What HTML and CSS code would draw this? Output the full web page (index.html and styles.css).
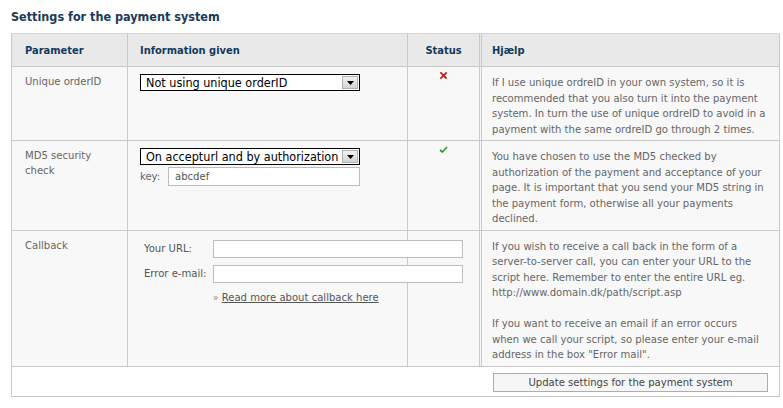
FILE: index.html
```html
<!DOCTYPE html>
<html lang="en">
<head>
<meta charset="utf-8">
<title>Settings for the payment system</title>
<link rel="stylesheet" href="styles.css">
</head>
<body>
<div class="page">
  <h1 class="title">Settings for the payment system</h1>
  <table class="settings">
    <colgroup>
      <col class="c-param">
      <col class="c-info">
      <col class="c-status">
      <col class="c-help">
    </colgroup>
    <thead>
      <tr>
        <th class="param">Parameter</th>
        <th class="info">Information given</th>
        <th class="status">Status</th>
        <th class="help">Hjælp</th>
      </tr>
    </thead>
    <tbody>
      <tr>
        <td class="param">Unique orderID</td>
        <td class="info">
          <div class="select">
            <span class="select-text">Not using unique orderID</span>
            <span class="select-btn"><svg width="7" height="4" viewBox="0 0 7 4"><path d="M0 0H7L3.5 4Z" fill="#000"/></svg></span>
          </div>
        </td>
        <td class="status">
          <svg class="icon" width="7" height="7" viewBox="0 0 7 7"><path d="M1 1L6 6M6 1L1 6" stroke="#c4261d" stroke-width="1.8" stroke-linecap="square"/></svg>
        </td>
        <td class="help">If I use unique ordreID in your own system, so it is recommended that you also turn it into the payment system. In turn the use of unique ordreID to avoid in a payment with the same ordreID go through 2 times.</td>
      </tr>
      <tr>
        <td class="param">MD5 security check</td>
        <td class="info">
          <div class="select">
            <span class="select-text">On accepturl and by authorization</span>
            <span class="select-btn"><svg width="7" height="4" viewBox="0 0 7 4"><path d="M0 0H7L3.5 4Z" fill="#000"/></svg></span>
          </div>
          <div class="key-row">
            <span class="key-label">key:</span>
            <span class="field key-field">abcdef</span>
          </div>
        </td>
        <td class="status">
          <svg class="icon" width="9" height="7" viewBox="0 0 9 7"><path d="M1 4L3.3 6L8 1" stroke="#2e9a2e" stroke-width="1.7" fill="none"/></svg>
        </td>
        <td class="help">You have chosen to use the MD5 checked by authorization of the payment and acceptance of your page. It is important that you send your MD5 string in the payment form, otherwise all your payments declined.</td>
      </tr>
      <tr>
        <td class="param">Callback</td>
        <td class="info">
          <div class="callback">
            <span class="cb-label">Your URL:</span>
            <span class="field cb-field"></span>
            <span class="cb-label">Error e-mail:</span>
            <span class="field cb-field"></span>
            <span class="cb-link"><span class="raquo">»</span> <a href="#">Read more about callback here</a></span>
          </div>
        </td>
        <td class="status"></td>
        <td class="help">If you wish to receive a call back in the form of a server-to-server call, you can enter your URL to the script here. Remember to enter the entire URL eg. http://www.domain.dk/path/script.asp<br><br>If you want to receive an email if an error occurs when we call your script, so please enter your e-mail address in the box "Error mail".</td>
      </tr>
      <tr class="actions">
        <td colspan="3" class="blank"></td>
        <td class="action"><span class="button">Update settings for the payment system</span></td>
      </tr>
    </tbody>
  </table>
</div>
</body>
</html>
```
FILE: styles.css
```css
html, body {
  margin: 0;
  padding: 0;
  background: #fff;
}

body {
  font-family: "DejaVu Sans Condensed", "DejaVu Sans", sans-serif;
  font-stretch: condensed;
  font-size: 11.2px;
  color: #666;
}

.page {
  padding: 9px 0 0 11px;
}

.title {
  margin: 0 0 8px;
  font-size: 12.5px;
  line-height: 16px;
  font-weight: bold;
  color: #183a5a;
}

.settings {
  width: 769px;
  table-layout: fixed;
  border-collapse: separate;
  border-spacing: 0;
  border-left: 1px solid #c9c9c9;
  border-top: 1px solid #d6d6d6;
}

.c-param { width: 116px; }
.c-info { width: 280px; }
.c-status { width: 74px; }
.c-help { width: 298px; }

.settings th,
.settings td {
  vertical-align: top;
  text-align: left;
  border-right: 1px solid #c9c9c9;
  border-bottom: 1px solid #c9c9c9;
  background: #f8f8f8;
  padding: 0;
}

.settings th {
  background: #e9e9e9;
  height: 33px;
  box-sizing: border-box;
  vertical-align: middle;
  font-weight: bold;
  color: #123a5e;
  font-size: 11px;
}

.settings .status {
  border-right: 3px double #c9c9c9;
  text-align: center;
}

.settings td.param {
  padding: 7px 13px 0;
  line-height: 15px;
}

.settings th.param { padding-left: 13px; }
.settings th.info { padding-left: 12px; }
.settings th.help { padding-left: 10px; }

.settings td.info {
  padding: 7px 12px 0;
}

.settings td.status {
  padding-top: 5px;
}

.icon {
  display: block;
  margin: 0 auto;
}

.settings td.help {
  padding: 8px 12px 3px 10px;
  line-height: 15.5px;
}

.select {
  width: 220px;
  height: 17px;
  box-sizing: border-box;
  border: 1px solid #000;
  background: #fff;
  display: flex;
  align-items: center;
  justify-content: space-between;
  color: #000;
  font-size: 12.5px;
}

.select-text {
  padding-left: 5px;
  white-space: nowrap;
}

.select-btn {
  width: 16px;
  height: 13px;
  margin-right: 1px;
  box-sizing: border-box;
  background: linear-gradient(#f0f0f0, #d4d4d4);
  border: 1px solid #b0b0b0;
  display: flex;
  align-items: flex-end;
  justify-content: center;
  padding-bottom: 3px;
}

.select-btn svg { display: block; }

.key-row {
  display: flex;
  align-items: center;
  margin-top: 2px;
}

.key-label {
  width: 28px;
}

.field {
  display: block;
  box-sizing: border-box;
  border: 1px solid #bdbdbd;
  background: #fff;
}

.key-field {
  width: 192px;
  height: 19px;
  line-height: 17px;
  padding-left: 6px;
  color: #555;
}

.callback {
  display: grid;
  grid-template-columns: 69px 250px;
  row-gap: 7px;
  align-items: center;
  padding: 2px 0 0 4px;
  margin-right: -60px;
  color: #555;
}

.cb-field {
  height: 18px;
}

.cb-link {
  grid-column: 2;
  margin-top: 1px;
  color: #555;
  white-space: nowrap;
}

.raquo {
  color: #888;
  font-size: 10px;
}

.cb-link a {
  color: #555;
  text-decoration: underline;
}

.actions td {
  background: #fff;
  border-right: 0;
}

.actions td.action {
  border-right: 1px solid #c9c9c9;
  height: 30px;
  padding: 6px 0 0 11px;
  box-sizing: border-box;
}

.button {
  display: block;
  width: 275px;
  height: 19px;
  box-sizing: border-box;
  border: 1px solid #adadad;
  background: #f6f6f6;
  color: #444;
  text-align: center;
  line-height: 17px;
}
```
